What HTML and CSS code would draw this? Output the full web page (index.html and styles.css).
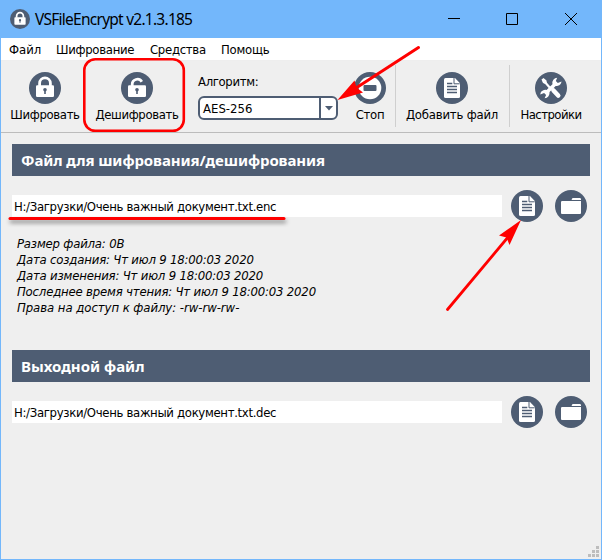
FILE: index.html
```html
<!DOCTYPE html>
<html lang="ru">
<head>
<meta charset="utf-8">
<title>VSFileEncrypt v2.1.3.185</title>
<link rel="stylesheet" href="styles.css">
</head>
<body>
<svg class="defs" width="0" height="0">
  <defs>
    <symbol id="lock" viewBox="0 0 32 32">
      <circle cx="16" cy="16" r="16" fill="#4e5d73"/>
      <path d="M10.6 14v-2.8a5.4 5.4 0 0 1 10.8 0V14" fill="none" stroke="#fff" stroke-width="2.8"/>
      <rect x="7" y="13.3" width="18" height="11.7" rx="1.2" fill="#fff"/>
      <circle cx="16" cy="17.8" r="1.8" fill="#4e5d73"/>
      <rect x="15.2" y="18" width="1.6" height="4" fill="#4e5d73"/>
    </symbol>
    <symbol id="unlock" viewBox="0 0 32 32">
      <circle cx="16" cy="16" r="16" fill="#4e5d73"/>
      <path d="M11.2 14.5V12.5a5.2 5.2 0 0 1 9.6-2.800" fill="none" stroke="#fff" stroke-width="2.8"/>
      <rect x="7" y="13.3" width="18" height="11.7" rx="1.2" fill="#fff"/>
      <circle cx="16" cy="17.8" r="1.8" fill="#4e5d73"/>
      <rect x="15.2" y="18" width="1.6" height="4" fill="#4e5d73"/>
    </symbol>
    <symbol id="doc" viewBox="0 0 32 32">
      <circle cx="16" cy="16" r="16" fill="#4e5d73"/>
      <path d="M9.5 6H19l5 5.3V24.5a1.5 1.5 0 0 1-1.5 1.5h-13A1.5 1.5 0 0 1 8 24.500v-17A1.5 1.5 0 0 1 9.500 6z" fill="#fff"/>
      <path d="M18 6v5.8h5.7" fill="none" stroke="#4e5d73" stroke-width="1"/>
      <path d="M11 11.5h5.3M11 14.5h10M11 17.500h10M11 20.500h10" stroke="#4e5d73" stroke-width="1.4"/>
    </symbol>
    <symbol id="folder" viewBox="0 0 32 32">
      <circle cx="16" cy="16" r="16" fill="#4e5d73"/>
      <path d="M6.8 11H26v12a1 1 0 0 1-1 1H7a1 1 0 0 1-1-1V11.800z" fill="#fff"/>
      <path d="M16.5 10l1-2h7.800l.7 .8V10z" fill="#fff"/>
    </symbol>
    <symbol id="stop" viewBox="0 0 32 32">
      <circle cx="16" cy="16" r="16" fill="#4e5d73"/>
      <circle cx="16" cy="16" r="11.3" fill="#fff"/>
      <rect x="9.5" y="13" width="13" height="6" rx="1" fill="#4e5d73"/>
    </symbol>
    <symbol id="tools" viewBox="0 0 32 32">
      <circle cx="16" cy="16" r="16" fill="#4e5d73"/>
      <path d="M8.3 8.3l7 8" stroke="#fff" stroke-width="2.2"/>
      <path d="M6.5 7.5l2-1.5 3 2.500.3 2.300-1.500 1.200-2.300-1z" fill="#fff"/>
      <path d="M18.5 18.5l4.700 5" stroke="#fff" stroke-width="4.6" stroke-linecap="round"/>
      <path d="M10.5 21.5L21.500 10.800" stroke="#fff" stroke-width="3.6"/>
      <path d="M22.2 5.700a5 5 0 0 0-4.700 6.200 5 5 0 0 0 9-2.400l-3.700 1.400-2-2z" fill="#fff"/>
      <path d="M9.6 26.200a5 5 0 0 0 4.800-6.200 5 5 0 0 0-9.100 2.500l3.800-1.500 2 2z" fill="#fff"/>
    </symbol>
  </defs>
</svg>

<div class="window">
  <header class="titlebar">
    <svg class="app-icon"><use href="#lock"/></svg>
    <h1 class="title">VSFileEncrypt v2.1.3.185</h1>
    <svg class="controls" viewBox="0 0 134 14" fill="none" stroke="#000">
      <path d="M1 6.500h12M59.500 1.500h11v11h-11zM118 1l12 12M130 1l-12 12"/>
    </svg>
  </header>

  <nav class="menu">
    <span class="m1">Файл</span><span class="m2">Шифрование</span><span class="m3">Средства</span><span class="m4">Помощь</span>
  </nav>

  <div class="toolbar">
    <div class="tool"><svg class="icon"><use href="#lock"/></svg><span class="t1">Шифровать</span></div>
    <div class="tool"><svg class="icon"><use href="#unlock"/></svg><span class="t2">Дешифровать</span></div>
    <div class="algorithm">
      <span class="t3">Алгоритм:</span>
      <div class="combo"><span class="combo-value">AES-256</span><span class="combo-button"><svg width="8" height="5"><path d="M0 0h8L4 4.500z" fill="#4e5d73"/></svg></span></div>
    </div>
    <div class="tool shifted"><svg class="icon"><use href="#stop"/></svg><span class="t4">Стоп</span></div>
    <i class="separator"></i>
    <div class="tool shifted"><svg class="icon"><use href="#doc"/></svg><span class="t5">Добавить файл</span></div>
    <i class="separator"></i>
    <div class="tool shifted"><svg class="icon"><use href="#tools"/></svg><span class="t6">Настройки</span></div>
  </div>

  <main class="content">
    <section class="source">
      <h2><span class="h-source">Файл для шифрования/дешифрования</span></h2>
      <div class="file-row">
        <div class="path">H:/Загрузки/Очень важный документ.txt.enc</div>
        <svg class="icon"><use href="#doc"/></svg>
        <svg class="icon"><use href="#folder"/></svg>
      </div>
      <div class="details">
        <div>Размер файла: 0B</div>
        <div>Дата создания: Чт июл 9 18:00:03 2020</div>
        <div>Дата изменения: Чт июл 9 18:00:03 2020</div>
        <div>Последнее время чтения: Чт июл 9 18:00:03 2020</div>
        <div class="rights">Права на доступ к файлу: -rw-rw-rw-</div>
      </div>
    </section>
    <section>
      <h2><span class="h-output">Выходной файл</span></h2>
      <div class="file-row">
        <div class="path">H:/Загрузки/Очень важный документ.txt.dec</div>
        <svg class="icon"><use href="#doc"/></svg>
        <svg class="icon"><use href="#folder"/></svg>
      </div>
    </section>
  </main>

  <svg class="grip" width="11" height="11" fill="#bdbdbd"><path d="M8 0h3v3H8zM4 4h3v3H4zM8 4h3v3H8zM0 8h3v3H0zM4 8h3v3H4zM8 8h3v3H8z"/></svg>
</div>

<svg class="annotations" width="602" height="560" viewBox="0 0 602 560">
  <rect x="84.300" y="59.300" width="99.500" height="71.500" rx="11" fill="none" stroke="#f00" stroke-width="2.600"/>
  <path d="M418.500 47.500L356 88" stroke="#f00" stroke-width="3" stroke-linecap="round"/>
  <path d="M337.500 100L354.500 80.500 356.500 87.500 363 92.500z" fill="#f00"/>
  <path d="M447.500 309.500L509 236" stroke="#f00" stroke-width="2.800" stroke-linecap="round"/>
  <path d="M521 220L499 235.500 506.500 237.500 509.500 245z" fill="#f00"/>
  <path class="underline" d="M10 218.500H284" stroke="#f00" stroke-width="3" stroke-linecap="round"/>
</svg>
</body>
</html>
```

FILE: styles.css
```css
* { box-sizing: border-box; }

body {
  margin: 0;
  font: 13px/16px "DejaVu Sans Condensed", "DejaVu Sans", sans-serif;
  font-stretch: condensed;
  color: #000;
}

.defs { position: absolute; }

.window {
  width: 602px;
  height: 560px;
  background: #efefef;
  border: solid #73b7fb;
  border-width: 0 1px 1px;
  display: flex;
  flex-direction: column;
  white-space: nowrap;
  overflow: hidden;
}

.titlebar {
  height: 38px;
  flex: none;
  display: flex;
  align-items: center;
  padding: 0 20px 0 9px;
  background: #73b7fb;
}

.app-icon { width: 20px; height: 20px; }

.title {
  margin: 0 0 1px 5px;
  font: 15.5px/22px "Noto Sans", sans-serif;
  letter-spacing: -0.75px;
}

.controls { width: 134px; height: 14px; margin-left: auto; }

.menu {
  height: 23px;
  flex: none;
  display: flex;
  padding: 4px 0 0 8px;
  background: #fff;
  border-bottom: 1px solid #eee;
}

.menu span { flex: none; }
.m1 { width: 47px; }
.m2 { width: 94px; letter-spacing: -0.3px; }
.m3 { width: 71px; letter-spacing: -0.3px; }
.m4 { letter-spacing: -0.25px; }

.toolbar {
  height: 72px;
  flex: none;
  display: grid;
  grid-template-columns: 88px 96px 161px 49px 1px 113px 1px 83px;
  border-bottom: 1px solid #bcbcbc;
}

.tool {
  display: flex;
  flex-direction: column;
  align-items: center;
  gap: 3px;
  padding-top: 11px;
}

.shifted { padding-right: 1px; }

.t1, .t2, .t3, .t4 { letter-spacing: -0.35px; }
.t5 { letter-spacing: -0.2px; }
.t6 { letter-spacing: -0.55px; }

.icon { width: 32px; height: 32px; flex: none; }

.separator { background: #cfcfcf; margin: 4px 0 5px; }

.algorithm { padding: 13px 0 0 13px; }

.combo {
  width: 140px;
  height: 24px;
  margin-top: 6px;
  display: flex;
  background: #fff;
  border: 2px solid #4e5d73;
  border-radius: 6px;
  line-height: 21px;
}

.combo-value { flex: 1; padding-left: 3px; }

.combo-button {
  width: 17px;
  border-left: 2px solid #4e5d73;
  display: flex;
  align-items: center;
  justify-content: center;
}

.content { padding: 11px 11px 0; }

.source { height: 206px; }

h2 {
  height: 32px;
  margin: 0;
  padding-left: 9px;
  background: #4e5d73;
  color: #fff;
  font: bold 15px/32px "Noto Sans", sans-serif;
}

.h-source { letter-spacing: -0.1px; }

.file-row {
  height: 32px;
  margin-top: 14px;
  display: flex;
  align-items: center;
}

.path {
  width: 490px;
  height: 22px;
  padding-left: 2px;
  line-height: 23px;
  letter-spacing: -0.32px;
  background: #fff;
}

.path + .icon { margin: 0 12px 0 9px; }

.details {
  margin: 14px 0 0 5px;
  font-style: italic;
  letter-spacing: -0.18px;
}

.rights { letter-spacing: -0.05px; }

.grip { position: absolute; left: 588px; top: 546px; }

.annotations { position: absolute; left: 0; top: 0; }

.underline { filter: drop-shadow(1px 3px 2px rgba(0, 0, 0, 0.45)); }
```
